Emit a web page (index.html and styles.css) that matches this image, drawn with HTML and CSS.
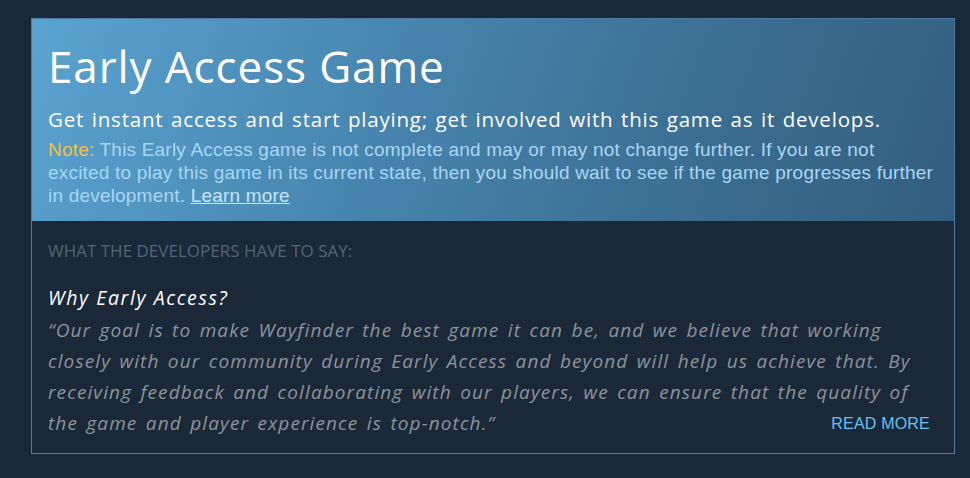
FILE: index.html
```html
<!DOCTYPE html>
<html lang="en">
<head>
  <meta charset="UTF-8">
  <title>Early Access Game</title>
  <link rel="stylesheet" href="styles.css">
</head>
<body>
  <div class="early-access">
    <div class="ea-header">
      <h1>Early Access Game</h1>
      <p class="ea-sub">Get instant access and start playing; get involved with this game as it develops.</p>
      <p class="ea-note"><span class="note-label">Note:</span> This Early Access game is not complete and may or may not change further. If you are not excited to play this game in its current state, then you should wait to see if the game progresses further in development. <a href="#">Learn more</a></p>
    </div>

    <div class="ea-dev">
      <div class="dev-label">What the developers have to say:</div>
      <h3>Why Early Access?</h3>
      <p class="dev-quote">“Our goal is to make Wayfinder the best game it can be, and we believe that working closely with our community during Early Access and beyond will help us achieve that. By receiving feedback and collaborating with our players, we can ensure that the quality of the game and player experience is top-notch.”<a class="read-more" href="#">Read more</a></p>
    </div>
  </div>
</body>
</html>
```

FILE: styles.css
```css
* {
  margin: 0;
  padding: 0;
  box-sizing: border-box;
}

body {
  background: #1b2838;
  font-family: "Liberation Sans", Arial, sans-serif;
  padding: 18px 15px 0 31px;
}

.early-access {
  width: 924px;
  border: 1px solid #4b7ca8;
}

.ea-header {
  background: linear-gradient(110deg, #5aa3d0 0%, #4684ad 40%, #3a6c8f 75%, #325e7e 100%);
  padding: 18px 16px 14px 16px;
}

.ea-header h1 {
  font-family: "Open Sans", sans-serif;
  font-weight: 400;
  font-size: 44px;
  line-height: 58px;
  letter-spacing: 0.9px;
  color: #fff;
  margin-bottom: 11px;
}

.ea-sub {
  font-family: "Open Sans", sans-serif;
  font-size: 20.5px;
  line-height: 26px;
  letter-spacing: 0.8px;
  word-spacing: 1.5px;
  color: #fff;
}

.ea-note {
  margin-top: 6px;
  font-size: 19px;
  line-height: 23px;
  letter-spacing: 0.2px;
  color: #a9d6f4;
}

.note-label {
  color: #f5c141;
}

.ea-note a {
  color: #c6e6fb;
  text-decoration: underline;
}

.ea-dev {
  padding: 19px 16px 14px 16px;
}

.dev-label {
  font-family: "Open Sans", sans-serif;
  font-size: 17px;
  line-height: 22px;
  text-transform: uppercase;
  color: #536676;
  margin-bottom: 23px;
}

.ea-dev h3 {
  font-family: "Open Sans", sans-serif;
  font-style: italic;
  font-weight: 400;
  font-size: 19.5px;
  line-height: 26px;
  letter-spacing: 1.6px;
  color: #fff;
}

.dev-quote {
  margin-top: 4px;
  font-family: "Open Sans", sans-serif;
  font-style: italic;
  font-size: 19px;
  line-height: 31px;
  letter-spacing: 1.1px;
  word-spacing: 2.4px;
  color: #8b949c;
}

.read-more {
  float: right;
  margin-right: 8px;
  font-family: "Liberation Sans", Arial, sans-serif;
  font-style: normal;
  font-size: 16px;
  letter-spacing: 0.2px;
  word-spacing: 0;
  text-transform: uppercase;
  color: #66c0f4;
  text-decoration: none;
}
```
